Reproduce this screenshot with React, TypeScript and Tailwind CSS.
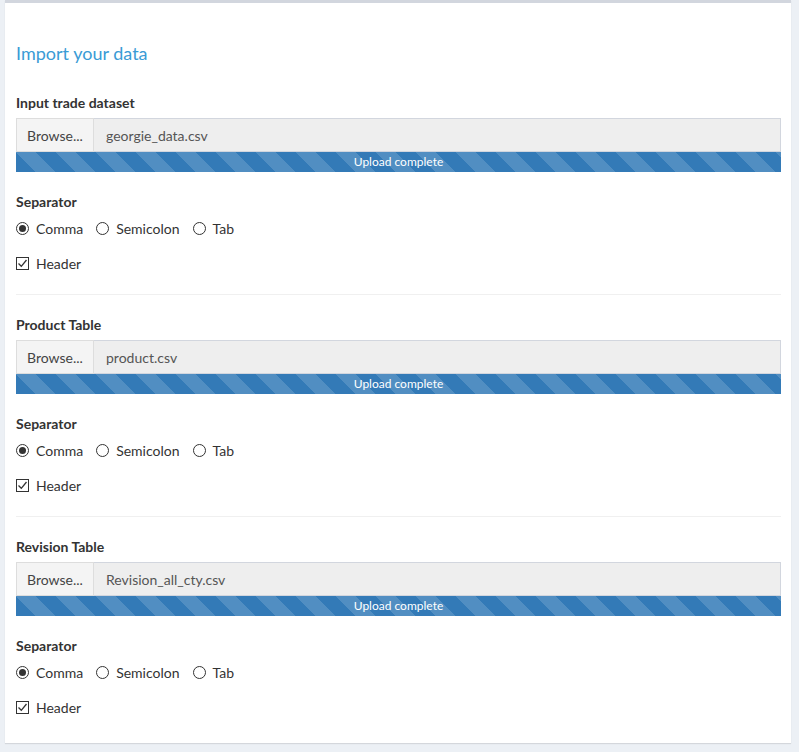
import React from "react";

const sections = [
  { label: "Input trade dataset", file: "georgie_data.csv" },
  { label: "Product Table", file: "product.csv" },
  { label: "Revision Table", file: "Revision_all_cty.csv" },
];

const Radio = ({ checked, text }: { checked?: boolean; text: string }) => (
  <label className="flex items-center mr-[13px]">
    <span className="w-[13px] h-[13px] rounded-full border border-[#333] flex items-center justify-center">
      {checked && <span className="w-[7px] h-[7px] rounded-full bg-[#333]" />}
    </span>
    <span className="ml-[7px]">{text}</span>
  </label>
);

const Checkbox = ({ text }: { text: string }) => (
  <label className="flex items-center">
    <span className="w-[13px] h-[13px] border border-[#333] flex items-center justify-center">
      <svg width="11" height="11" viewBox="0 0 11 11">
        <path d="M1.5 5.5 L4.3 8.3 L9.5 2" fill="none" stroke="#333" strokeWidth="1.3" />
      </svg>
    </span>
    <span className="ml-[7px]">{text}</span>
  </label>
);

const Section = ({ label, file, last }: { label: string; file: string; last?: boolean }) => (
  <div>
    <div className="font-bold leading-5 h-5">{label}</div>
    <div className="mt-[5px] flex h-[34px]">
      <div className="w-[78px] shrink-0 bg-[#f4f4f4] border border-[#ddd] flex items-center justify-center text-[#444]">
        Browse...
      </div>
      <div className="flex-1 bg-[#eeeeee] border border-l-0 border-[#d2d6de] flex items-center pl-3 text-[#555]">
        {file}
      </div>
    </div>
    <div className="h-5 bg-[#337ab7] bg-[linear-gradient(45deg,rgba(255,255,255,.15)_25%,transparent_25%,transparent_50%,rgba(255,255,255,.15)_50%,rgba(255,255,255,.15)_75%,transparent_75%,transparent)] bg-size-[40px_40px] text-white text-xs flex items-center justify-center">
      Upload complete
    </div>
    <div className="mt-5 font-bold leading-5 h-5">Separator</div>
    <div className="mt-[6px] flex h-5 items-center">
      <Radio checked text="Comma" />
      <Radio text="Semicolon" />
      <Radio text="Tab" />
    </div>
    <div className="mt-[15px] h-5 flex items-center">
      <Checkbox text="Header" />
    </div>
    {!last && <div className="mt-[21px] mb-5 h-px bg-[#f0f0f0]" />}
  </div>
);

export default function App() {
  return (
    <div className="min-h-[752px] bg-[#ecf0f5] pl-[5px] pr-2 pb-2 font-['Lato',sans-serif] text-[14px] text-[#333]">
      <div className="bg-white border-t-[3px] border-[#d2d6de] shadow-[0_1px_1px_rgba(0,0,0,0.1)] pl-[11px] pr-[10px] pt-[40px] pb-[26px]">
        <div className="text-[18px] leading-5 h-5 text-[#3a9bd5]">Import your data</div>
        <div className="mt-[30px]">
          {sections.map((s, i) => (
            <Section key={s.label} label={s.label} file={s.file} last={i === sections.length - 1} />
          ))}
        </div>
      </div>
    </div>
  );
}
